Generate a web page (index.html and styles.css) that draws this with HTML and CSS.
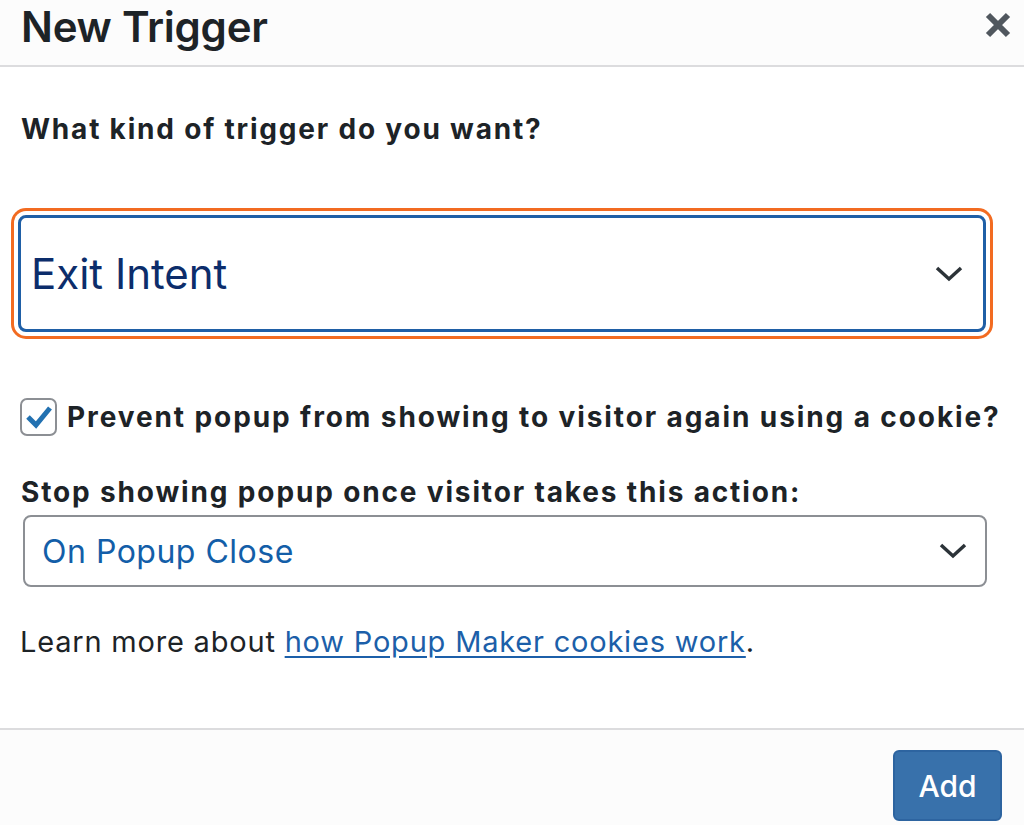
FILE: index.html
```html
<!DOCTYPE html>
<html>
<head>
<meta charset="utf-8">
<link rel="stylesheet" href="styles.css">
</head>
<body>
<div class="modal">
  <div class="header">
    <h1 class="title">New Trigger</h1>
    <button class="close" aria-label="Close">
      <svg width="28" height="28" viewBox="0 0 28 28"><path d="M4 4 L24 24 M24 4 L4 24" stroke="#50575e" stroke-width="6" stroke-linecap="butt"/></svg>
    </button>
  </div>
  <div class="content">
    <div class="question">What kind of trigger do you want?</div>
    <div class="select select-focus">
      <span class="select-value">Exit Intent</span>
      <svg class="chev" width="28" height="16" viewBox="0 0 28 16"><path d="M2 2 L14 13 L26 2" fill="none" stroke="#2c3338" stroke-width="3.5"/></svg>
    </div>
    <label class="check-row">
      <span class="checkbox">
        <svg width="28" height="26" viewBox="0 0 28 26"><path d="M3 13 L11 21 L25 4" fill="none" stroke="#2271b1" stroke-width="5"/></svg>
      </span>
      <span class="check-label">Prevent popup from showing to visitor again using a cookie?</span>
    </label>
    <div class="stop-label">Stop showing popup once visitor takes this action:</div>
    <div class="select select-small">
      <span class="select-value2">On Popup Close</span>
      <svg class="chev" width="28" height="16" viewBox="0 0 28 16"><path d="M2 2 L14 13 L26 2" fill="none" stroke="#2c3338" stroke-width="3.5"/></svg>
    </div>
    <p class="learn">Learn more about <a href="#">how Popup Maker cookies work</a>.</p>
  </div>
  <div class="footer">
    <button class="add">Add</button>
  </div>
</div>
</body>
</html>
```
FILE: styles.css
```css
html, body {
  margin: 0;
  padding: 0;
  background: #ffffff;
}
body {
  font-family: Inter, "Noto Sans", "Liberation Sans", sans-serif;
  color: #1d2327;
}
.modal {
  width: 1024px;
  height: 825px;
  display: flex;
  flex-direction: column;
  overflow: hidden;
}
.header {
  height: 67px;
  box-sizing: border-box;
  background: #fcfcfc;
  border-bottom: 2px solid #dcdcde;
  display: flex;
  align-items: center;
  justify-content: space-between;
  padding: 0 12px 0 21px;
}
.title {
  margin: 0;
  font-size: 42px;
  font-weight: 600;
  color: #1d2327;
  line-height: 1;
  position: relative;
  top: -6px;
  letter-spacing: -0.25px;
}
.close {
  border: 0;
  background: transparent;
  padding: 0;
  display: flex;
  position: relative;
  top: -8px;
}
.content {
  flex: 1;
}
.question {
  margin: 44px 0 0 21px;
  font-size: 28px;
  line-height: 36px;
  font-weight: 700;
  letter-spacing: 1.8px;
}
.select {
  box-sizing: border-box;
  display: flex;
  align-items: center;
  justify-content: space-between;
  background: #fff;
}
.select-focus {
  margin: 68px 0 0 18px;
  width: 968px;
  height: 117px;
  border: 3px solid #1f5fa6;
  border-radius: 8px;
  box-shadow: 0 0 0 4px #ffffff, 0 0 0 7px #f26b21;
  padding: 0 20px 0 10px;
}
.select-value {
  font-size: 42px;
  color: #0c2d6b;
  font-weight: 400;
}
.check-row {
  display: flex;
  align-items: center;
  margin: 66px 0 0 20px;
  height: 38px;
}
.checkbox {
  box-sizing: border-box;
  width: 37px;
  height: 38px;
  border: 2px solid #8c8f94;
  border-radius: 7px;
  background: #fff;
  display: flex;
  align-items: center;
  justify-content: center;
  margin-right: 10px;
}
.check-label {
  font-size: 28px;
  font-weight: 700;
  white-space: nowrap;
  letter-spacing: 1.9px;
}
.stop-label {
  margin: 38px 0 0 21px;
  font-size: 28px;
  line-height: 36px;
  font-weight: 700;
  letter-spacing: 1.85px;
}
.select-small {
  margin: 5px 0 0 23px;
  width: 964px;
  height: 72px;
  border: 2px solid #8c8f94;
  border-radius: 8px;
  padding: 0 18px 0 17px;
}
.select-value2 {
  font-size: 32px;
  color: #135ea8;
  letter-spacing: 0.5px;
}
.learn {
  margin: 37px 0 0 20px;
  font-size: 29px;
  line-height: 36px;
  color: #1d2327;
  letter-spacing: 0.8px;
}
.learn a {
  color: #1c5fa9;
  text-decoration: underline;
  text-underline-offset: 4px;
}
.footer {
  height: 97px;
  box-sizing: border-box;
  background: #fcfcfc;
  border-top: 2px solid #dcdcde;
  display: flex;
  justify-content: flex-end;
  align-items: flex-start;
  padding: 20px 22px 0 0;
}
.add {
  width: 109px;
  height: 71px;
  background: #3871ab;
  border: 2px solid #2d64a0;
  border-radius: 6px;
  color: #fff;
  font-family: Inter, "Noto Sans", "Liberation Sans", sans-serif;
  font-size: 30px;
  font-weight: 500;
}
```
